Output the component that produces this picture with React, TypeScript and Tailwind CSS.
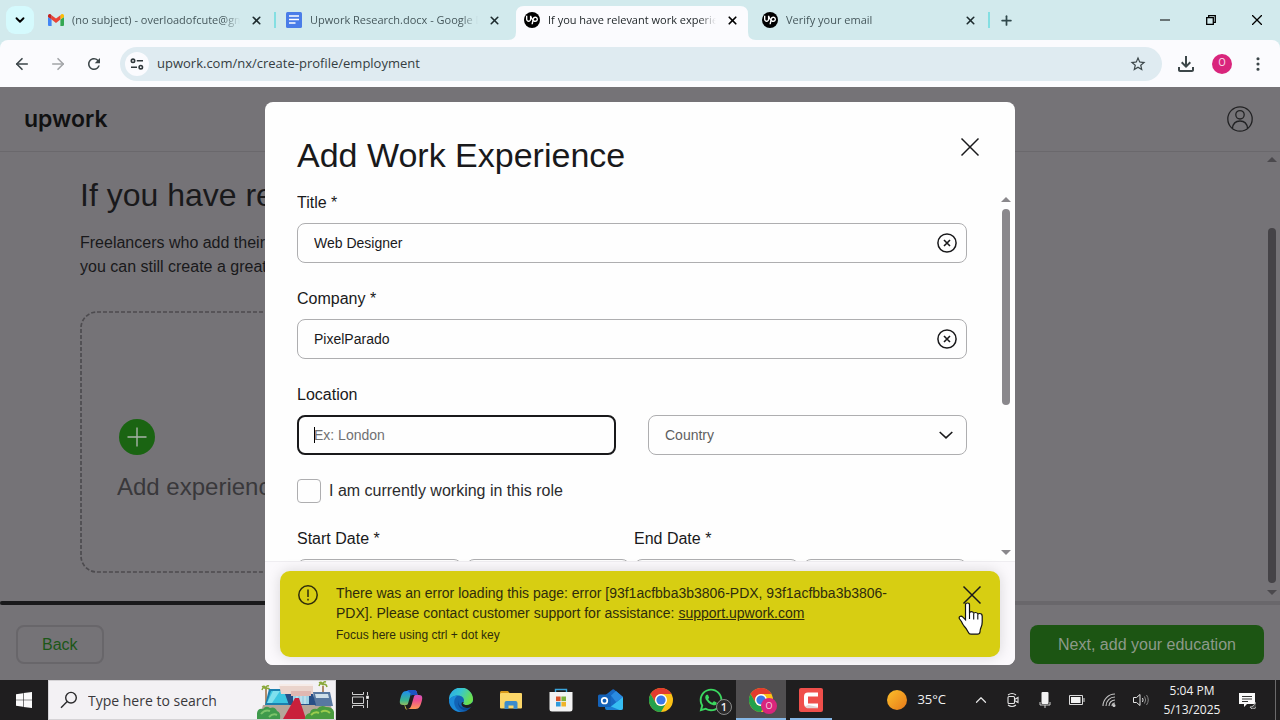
import type { ReactNode } from 'react'
import {
  ArrowLeft,
  ArrowRight,
  ChevronDown,
  ChevronUp,
  EllipsisVertical,
  Plus,
  X,
} from 'lucide-react'
import { FaWhatsapp } from 'react-icons/fa'
import { MdOutlineFileDownload, MdRefresh, MdStarBorder } from 'react-icons/md'
import { SiUpwork } from 'react-icons/si'

function GmailIcon() {
  return (
    <svg viewBox="0 0 16 12" className="h-3 w-4 shrink-0">
      <path d="M1 12h2.600V5.600L0 2.900V11a1 1 0 0 0 1 1z" fill="#4285f4" />
      <path d="M12.400 12H15a1 1 0 0 0 1-1V2.900l-3.600 2.700z" fill="#34a853" />
      <path d="M12.400 1.200v4.400L16 2.900V1.600C16 .2 14.300-.5 13.200.4z" fill="#fbbc04" />
      <path d="M3.600 5.600V1.200L8 4.500l4.400-3.300v4.400L8 8.900z" fill="#ea4335" />
      <path d="M0 1.600v1.300l3.600 2.700V1.200L2.800.4C1.700-.5 0 .2 0 1.600z" fill="#c5221f" />
    </svg>
  )
}

function DocsIcon() {
  return (
    <svg viewBox="0 0 16 16" className="size-4 shrink-0">
      <rect width="16" height="16" rx="1.500" fill="#4a7de8" />
      <path d="M3 4h10M3 7.500h10M3 11h6.500" stroke="#fff" strokeWidth="1.700" />
    </svg>
  )
}

function UpworkIcon() {
  return (
    <span className="flex size-4 shrink-0 items-center justify-center rounded-full bg-black text-white">
      <SiUpwork className="size-3" />
    </span>
  )
}

function ChromeIcon() {
  return (
    <svg viewBox="0 0 24 24" className="size-6">
      <circle cx="12" cy="12" r="12" fill="#fbc116" />
      <path d="M1.600 6a12 12 0 0 1 20.800 0H12a6 6 0 0 0-5.200 9z" fill="#e33b2e" />
      <path d="M1.600 6A12 12 0 0 0 12 24l5.200-9A6 6 0 0 1 6.800 15z" fill="#23a14c" />
      <circle cx="12" cy="12" r="6" fill="#fff" />
      <circle cx="12" cy="12" r="4.600" fill="#3b78e7" />
    </svg>
  )
}

function CopilotIcon() {
  return (
    <svg viewBox="0 0 24 24" className="size-6">
      <defs>
        <linearGradient id="copilotLeft" x1="0" y1="0" x2="0" y2="1">
          <stop offset="0" stopColor="#1d8df0" />
          <stop offset=".5" stopColor="#3cb68d" />
          <stop offset="1" stopColor="#f0c52c" />
        </linearGradient>
        <linearGradient id="copilotRight" x1="0" y1="0" x2="0" y2="1">
          <stop offset="0" stopColor="#b35bee" />
          <stop offset=".55" stopColor="#ee4f8f" />
          <stop offset="1" stopColor="#ff9a55" />
        </linearGradient>
      </defs>
      <path d="M16 2h-1c3 0 3 3 3.600 5H20c4 0 3.500 3.500 2.500 7s-2 7-6 7H8c3 0 4-2 4.800-5l2-7c.6-2 1.200-2 3.200-2z" fill="url(#copilotRight)" />
      <path d="M8 22h1c-3 0-3-3-3.600-5H4c-4 0-3.500-3.500-2.500-7s2-7 6-7H16c-3 0-4 2-4.800 5l-2 7c-.6 2-1.200 2-3.200 2z" fill="url(#copilotLeft)" />
      <path d="M8 2h7c2.500 0 3 2 3.600 5H15c-2 0-3 .3-3.500 1.500L12 6z" fill="#1c55c4" />
    </svg>
  )
}

function EdgeIcon() {
  return (
    <svg viewBox="0 0 24 24" className="size-6">
      <defs>
        <linearGradient id="edgeTop" x1="0" y1="0" x2="1" y2=".4">
          <stop offset="0" stopColor="#2aa8e8" />
          <stop offset=".5" stopColor="#37c6d0" />
          <stop offset="1" stopColor="#6be04f" />
        </linearGradient>
      </defs>
      <circle cx="12" cy="12" r="12" fill="#1263b5" />
      <path d="M0 12A12 12 0 0 1 24 11c.2 4-3 6-6 6-2.500 0-4-.8-4-1.800 0-.8 1-1.200 1-3 0-2.500-2.500-4.700-6-4.700C4.500 7.500 1 10 0 12z" fill="url(#edgeTop)" />
      <path d="M0 12c1-2.500 4.500-4.500 9-4.500-3 1.500-4.500 5-3.500 9 .8 3.500 3.500 6.500 7 7.400C5.500 24.300 0 19 0 12z" fill="#1b8ad8" />
      <path d="M9.500 11.500c-1.500 4.500 2.500 9 8 8 2-.3 3.500-1 4.500-1.700-.8 1.700-2.300 3.400-4 4.500-5 1-11-4.500-8.500-10.800z" fill="#0b4a94" />
      <path d="M14.800 14.200c-.3.500-.8.600-.8 1 0 1 1.500 1.800 4 1.800 2.300 0 4.700-1.200 5.600-3.200L24 17l-2 2c-5 2.300-9.500 0-9.500-3 0-1 .6-2.300 2.300-1.800z" fill="#1f1f1f" />
    </svg>
  )
}

function ExplorerIcon() {
  return (
    <svg viewBox="0 0 22 18" className="h-[18px] w-[22px]">
      <path d="M0 1.500C0 .7.7 0 1.500 0H8l2 2.500H0z" fill="#d99a1c" />
      <rect y="2" width="22" height="15.500" rx="1" fill="#fbd668" />
      <path d="M4.500 18v-6a2 2 0 0 1 2-2h9a2 2 0 0 1 2 2v6h-4v-3.500h-5V18z" fill="#3d8ccc" />
    </svg>
  )
}

function StoreIcon() {
  return (
    <svg viewBox="0 0 24 24" className="size-6">
      <path d="M6.500 5V1.500h11V5" fill="none" stroke="#3aa5dc" strokeWidth="1.400" />
      <path d="M.5 4h23v17a2.500 2.500 0 0 1-2.500 2.500H3A2.500 2.500 0 0 1 .5 21z" fill="#f3f3f3" />
      <path d="M7 8.500h4.600v4.600H7z" fill="#d9532c" />
      <path d="M12.400 8.500H17v4.600h-4.600z" fill="#7fb33a" />
      <path d="M7 13.900h4.600v4.600H7z" fill="#2f9bdc" />
      <path d="M12.400 13.900H17v4.600h-4.600z" fill="#f0b429" />
    </svg>
  )
}

function OutlookIcon() {
  return (
    <svg viewBox="0 0 26 22" className="h-[22px] w-[26px]">
      <path d="M5 8l9.500-7.500Q15 0 16 .5L25 8v11a2 2 0 0 1-2 2H9z" fill="#1769c4" />
      <path d="M13 6.500L18 2l7 6-7 5z" fill="#2a8ae0" />
      <path d="M25 8v11a2 2 0 0 1-2 2H8.500z" fill="#36bdf2" />
      <path d="M7 15l14.500 6H9a2 2 0 0 1-2-2z" fill="#1a7fd4" />
      <rect y="5.500" width="13" height="12.500" rx="1.500" fill="#1462b8" />
      <circle cx="6.500" cy="11.700" r="2.800" fill="none" stroke="#fff" strokeWidth="1.700" />
    </svg>
  )
}

function CamtasiaIcon() {
  return (
    <svg viewBox="0 0 24 24" className="size-6">
      <rect width="24" height="24" rx="2" fill="#ef4f4b" />
      <path d="M19 6.500H9Q7 6.500 7 8.500v7q0 2 2 2h10" fill="none" stroke="#fff" strokeWidth="4" />
      <path d="M5.500 18.500l2.500 1.700h11V19L9.500 17z" fill="#e3d4d4" />
    </svg>
  )
}

function VillaPicture() {
  return (
    <svg viewBox="0 0 78 38" className="h-[38px] w-[78px] shrink-0">
      <path d="M9 8v18M66 5v18" stroke="#9a6b3f" strokeWidth="1.500" />
      <path
        d="M9 8Q6 5 5 9M9 8Q8 4 5 6M9 8q0-4 3-3M9 8q3-2 4 2M66 4q-3-3-4 1M66 4q-1-4-4-2M66 4q0-4 3-3M66 4q3-2 4 2"
        fill="none"
        stroke="#8aa83a"
        strokeWidth="1.500"
      />
      <path d="M6 24h68l2 14H2z" fill="#b5a69a" />
      <path d="M12 8h20l2 16H8z" fill="#1b7fae" />
      <path d="M14 10h16l1 12H10z" fill="#3cc5e0" />
      <path d="M16 10h7l-8 12h-5z" fill="#7fe0ee" />
      <path d="M56 11h17l3 14H58z" fill="#5878a0" />
      <path d="M58 13h13l1 4H59z" fill="#cfe0ea" />
      <path d="M22 3h34v10H24z" fill="#ead4cc" />
      <path d="M22 3h34v2H22z" fill="#f6ece8" />
      <path d="M28 13h28l3 11H32z" fill="#274f86" />
      <path d="M34 10h20v5H34z" fill="#e0b7b1" />
      <path d="M36 15h16v8H36z" fill="#9ed3e6" />
      <path d="M40 15v8M44 15v8M48 15v8" stroke="#d9e6ee" />
      <path d="M38 17h4l7 21H26z" fill="#c9203c" />
      <path d="M0 38v-6q1-5 6-4 3-4 7-1 5-2 7 3 4 1 3 8z" fill="#3f9a4c" />
      <path d="M4 33q4-5 9-3M12 36q4-4 8-2" stroke="#7cc46b" fill="none" strokeWidth="2" />
      <path d="M48 38q0-5 5-6 1-5 7-4 4-5 9-2 7 0 8 5v7z" fill="#4a9b3f" />
      <path d="M54 34q4-4 8-2M64 31q5-3 9 1" stroke="#9bcc4e" fill="none" strokeWidth="2" />
    </svg>
  )
}

interface TabProps {
  icon: ReactNode
  title: string
  active?: boolean
  divider?: boolean
}

function BrowserTab({ icon, title, active, divider }: TabProps) {
  if (active) {
    return (
      <div className="relative flex h-[34px] w-[238px] shrink items-start pr-[6px]">
        <svg viewBox="0 0 248 34" preserveAspectRatio="none" className="absolute -left-2 top-0 h-[34px] w-[248px]">
          <path d="M0 34q8 0 8-8V8q0-8 8-8h216q8 0 8 8v18q0 8 8 8z" fill="#fbfbfe" />
        </svg>
        <div className="relative flex h-7 min-w-0 flex-1 items-center gap-2 pl-2">
          {icon}
          <span className="min-w-0 flex-1 overflow-hidden whitespace-nowrap mask-r-from-90% text-[#22282b]">
            {title}
          </span>
          <button type="button" aria-label="Close tab" className="-ml-2 flex size-8 items-center justify-center text-black">
            <X className="size-[13px]" strokeWidth={3.2} />
          </button>
        </div>
      </div>
    )
  }
  return (
    <div className="flex h-7 w-[238px] shrink items-center">
      <div className="flex min-w-0 flex-1 items-center gap-2 pl-2">
        {icon}
        <span className="min-w-0 flex-1 overflow-hidden whitespace-nowrap mask-r-from-90% text-[#46585c]">
          {title}
        </span>
        <button type="button" aria-label="Close tab" className="-ml-2 flex size-8 items-center justify-center text-[#1d2b2e]">
          <X className="size-[13px]" strokeWidth={3} />
        </button>
      </div>
      <span className="flex w-[6px] justify-center">{divider && <span className="h-4 w-0.5 bg-[#84dfe2]" />}</span>
    </div>
  )
}

function TabStrip() {
  return (
    <div className="flex h-10 items-start bg-[#d2eaed] pt-[6px] font-['Open_Sans','Noto_Sans',sans-serif] text-[11px]">
      <button type="button" aria-label="Search tabs" className="mx-[6px] flex size-7 items-center justify-center rounded-[9px] bg-[#d5fafd]">
        <ChevronDown className="size-[14px]" strokeWidth={3.2} />
      </button>
      <div className="flex min-w-0">
        <BrowserTab icon={<GmailIcon />} title="(no subject) - overloadofcute@gmail.com" divider />
        <BrowserTab icon={<DocsIcon />} title="Upwork Research.docx - Google Docs" />
        <BrowserTab icon={<UpworkIcon />} title="If you have relevant work experience" active />
        <BrowserTab icon={<UpworkIcon />} title="Verify your email" divider />
      </div>
      <button type="button" aria-label="New tab" className="flex size-7 items-center justify-center text-[#30484c]">
        <Plus className="size-[15px]" strokeWidth={2.8} />
      </button>
      <div className="-mt-[6px] ml-auto flex h-10">
        <button type="button" aria-label="Minimize" className="flex w-[46px] items-center justify-center">
          <svg viewBox="0 0 10 10" className="size-[10px]">
            <path d="M0 5h10" stroke="#000" />
          </svg>
        </button>
        <button type="button" aria-label="Restore" className="flex w-[46px] items-center justify-center">
          <svg viewBox="0 0 10 10" className="size-[10px]">
            <path d="M.7 2.700h6.600v6.600H.7zM2.700 2.500V.7h6.600v6.600H7.500" fill="none" stroke="#000" strokeWidth="1.300" />
          </svg>
        </button>
        <button type="button" aria-label="Close" className="flex w-[46px] items-center justify-center">
          <svg viewBox="0 0 10 10" className="size-[10px]">
            <path d="M0 0l10 10M10 0L0 10" stroke="#000" strokeWidth="1.300" />
          </svg>
        </button>
      </div>
    </div>
  )
}

function Toolbar() {
  return (
    <div className="bg-[#d2eaed]">
      <div className="flex h-[47px] items-center rounded-t-lg bg-[#fbfbfe] px-1 text-[#3c4649]">
        <button type="button" aria-label="Back" className="flex size-9 items-center justify-center">
          <ArrowLeft className="size-[18px]" strokeWidth={2.2} />
        </button>
        <button type="button" aria-label="Forward" className="flex size-9 items-center justify-center text-[#a3a5a8]">
          <ArrowRight className="size-[18px]" strokeWidth={2.2} />
        </button>
        <button type="button" aria-label="Reload" className="flex size-9 items-center justify-center">
          <MdRefresh className="size-[18px]" />
        </button>
        <div className="ml-2 flex h-[34px] flex-1 items-center rounded-full bg-[#dfebf1] pl-[5px] pr-[6px]">
          <button type="button" aria-label="View site information" className="flex size-6 items-center justify-center rounded-full bg-[#fbfbfe]">
            <svg viewBox="0 0 14 12" className="h-3 w-[14px]" fill="none" stroke="#30383b" strokeWidth="1.600">
              <circle cx="3" cy="2.800" r="1.700" />
              <path d="M6.800 2.800H13M1 9.200h6" />
              <circle cx="10.800" cy="9.200" r="1.700" />
            </svg>
          </button>
          <input
            aria-label="Address"
            defaultValue="upwork.com/nx/create-profile/employment"
            className="ml-2 min-w-0 flex-1 bg-transparent font-['Open_Sans','Noto_Sans',sans-serif] text-[13px] text-[#353d42] outline-none"
          />
          <button type="button" aria-label="Bookmark this tab" className="flex size-9 items-center justify-center">
            <MdStarBorder className="size-[18px]" />
          </button>
        </div>
        <button type="button" aria-label="Downloads" className="ml-[6px] flex size-9 items-center justify-center">
          <MdOutlineFileDownload className="size-6" />
        </button>
        <button type="button" aria-label="Profile" className="flex size-9 items-center justify-center">
          <span className="flex size-5 items-center justify-center rounded-full bg-[#d9257c] font-[Roboto,sans-serif] text-[11px] text-[#f6d3e4]">
            O
          </span>
        </button>
        <button type="button" aria-label="Menu" className="flex size-9 items-center justify-center">
          <EllipsisVertical className="size-[18px]" strokeWidth={2.2} />
        </button>
      </div>
    </div>
  )
}

function Triangle({ down }: { down?: boolean }) {
  return (
    <svg viewBox="0 0 10 5" className="h-[5px] w-[10px]">
      <path d={down ? 'M0 0h10L5 5z' : 'M0 5h10L5 0z'} fill="currentColor" />
    </svg>
  )
}

function ProfilePage() {
  return (
    <div className="flex h-full flex-col bg-[#757377] text-[#19191b]">
      <header className="flex h-[65px] items-center justify-between border-b border-[#6a686c] pl-6 pr-[27px]">
        <a href="#home" className="font-['Inter','Liberation_Sans',sans-serif] text-[23px] leading-8 font-semibold text-[#111112]">
          upwork
        </a>
        <button type="button" aria-label="Account">
          <svg viewBox="0 0 26 26" className="size-[26px]" fill="none" stroke="#222224" strokeWidth="1.300">
            <circle cx="13" cy="13" r="12.200" />
            <circle cx="13" cy="8.800" r="4.200" />
            <path d="M5.500 22.300c.4-4.500 3.200-7.300 7.500-7.300s7.100 2.800 7.500 7.300" />
          </svg>
        </button>
      </header>

      <div className="flex min-h-0 flex-1">
        <main className="min-w-0 flex-1 overflow-hidden pl-20 pt-[23px]">
          <h1 className="text-[32px] leading-[40px]">If you have relevant work experience, add it here.</h1>
          <p className="mt-4 text-[16px] leading-6">
            Freelancers who add their experience are twice as likely to win work.
            <br />
            you can still create a great profile. Just head on to the next page.
          </p>
          <button
            type="button"
            className="relative mt-8 flex h-[262px] w-[374px] flex-col items-start justify-end pb-[70px] pl-[37px] text-[#39383b]"
          >
            <svg viewBox="0 0 374 262" className="absolute inset-0 size-full">
              <rect
                x="1"
                y="1"
                width="372"
                height="260"
                rx="16"
                fill="none"
                stroke="#4d4b4f"
                strokeWidth="1.700"
                strokeDasharray="4 2"
              />
            </svg>
            <span className="ml-0.5 flex size-9 items-center justify-center rounded-full bg-[#1a6412] text-[#a9b3a9]">
              <svg viewBox="0 0 20 20" className="size-5">
                <path d="M10 .5v19M.5 10h19" stroke="currentColor" strokeWidth="1.400" />
              </svg>
            </span>
            <span className="mt-4 text-[24px] leading-8">Add experience</span>
          </button>
        </main>
        <div className="flex w-4 flex-col items-center justify-between pb-[6px] pt-[5px] text-[#4b494d]">
          <Triangle />
          <div className="mb-[7px] mt-auto h-[355px] w-2 rounded-full bg-[#454347]" />
          <Triangle down />
        </div>
      </div>

      <div className="h-1 bg-[#69676b]">
        <div className="h-full w-1/2 rounded-full bg-[#19191b]" />
      </div>
      <footer className="flex items-start justify-between px-4 pb-4 pt-5 text-[16px]">
        <button type="button" className="h-[39px] rounded-lg border-2 border-[#68666a] px-6 text-[#1c5717]">
          Back
        </button>
        <button type="button" className="h-[39px] w-[234px] rounded-lg bg-[#1c5513] text-[#8d9a8a]">
          Next, add your education
        </button>
      </footer>
    </div>
  )
}

interface FieldProps {
  id: string
  label: string
  value: string
}

function ClearableField({ id, label, value }: FieldProps) {
  return (
    <div className="flex flex-col gap-2">
      <label htmlFor={id} className="leading-6">
        {label}
      </label>
      <div className="flex h-10 items-center rounded-lg border border-[#aeaeb0] pl-4 pr-[9px]">
        <input id={id} defaultValue={value} className="min-w-0 flex-1 text-[14px] outline-none" />
        <button type="button" aria-label={`Clear ${id}`}>
          <svg viewBox="0 0 20 20" className="size-5" fill="none" stroke="#19191b" strokeWidth="1.500">
            <circle cx="10" cy="10" r="9.100" />
            <path d="M7 7l6 6M13 7l-6 6" strokeWidth="1.600" />
          </svg>
        </button>
      </div>
    </div>
  )
}

function DateFields({ label }: { label: string }) {
  return (
    <fieldset>
      <legend className="mb-2 leading-6">{label}</legend>
      <div className="grid grid-cols-2 gap-1">
        <select aria-label={`${label} month`} className="h-10 appearance-none rounded-lg border border-[#aeaeb0]" />
        <select aria-label={`${label} year`} className="h-10 appearance-none rounded-lg border border-[#aeaeb0]" />
      </div>
    </fieldset>
  )
}

function CloseIcon() {
  return (
    <svg viewBox="0 0 24 24" className="size-6" fill="none" stroke="#19191b" strokeWidth="1.500">
      <path d="M3.500 3.500l17 17M20.500 3.500l-17 17" />
    </svg>
  )
}

function WorkExperienceDialog() {
  return (
    <div
      role="dialog"
      aria-labelledby="dialogTitle"
      className="flex h-full w-full max-w-[750px] flex-col rounded-lg bg-[#fefefe] text-[#19191b]"
    >
      <div className="flex items-start justify-between pb-4 pl-8 pr-[33px] pt-[33px]">
        <h2 id="dialogTitle" className="text-[34px] leading-10">
          Add Work Experience
        </h2>
        <button type="button" aria-label="Close dialog">
          <CloseIcon />
        </button>
      </div>

      <div className="flex min-h-0 flex-1 pl-8 pr-px">
        <form className="mr-[31px] flex min-w-0 flex-1 flex-col gap-6 overflow-hidden text-[16px]">
          <ClearableField id="title" label="Title *" value="Web Designer" />
          <ClearableField id="company" label="Company *" value="PixelParado" />
          <div className="flex flex-col gap-2">
            <label htmlFor="city" className="leading-6">
              Location
            </label>
            <div className="grid grid-cols-2 gap-8 text-[14px]">
              <div className="relative">
                <input
                  id="city"
                  placeholder="Ex: London"
                  className="h-10 w-full rounded-lg border-2 border-[#19191b] px-[15px] outline-none placeholder:text-[#707072]"
                />
                <span className="absolute left-[17px] top-3 h-4 w-px bg-black" />
              </div>
              <div className="relative">
                <select
                  aria-label="Country"
                  className="h-10 w-full appearance-none rounded-lg border border-[#aeaeb0] px-4 text-[#5e5e60]"
                >
                  <option>Country</option>
                </select>
                <svg
                  viewBox="0 0 14 8"
                  className="pointer-events-none absolute right-[14px] top-4 h-2 w-[14px]"
                  fill="none"
                  stroke="#19191b"
                  strokeWidth="1.600"
                >
                  <path d="M.7 1L7 6.800 13.300 1" />
                </svg>
              </div>
            </div>
          </div>
          <label className="flex items-center gap-2 leading-6 text-[#2b2b2d]">
            <input type="checkbox" className="size-6 appearance-none rounded-[4px] border border-[#aeaeb0]" />
            I am currently working in this role
          </label>
          <div className="grid grid-cols-2 gap-1">
            <DateFields label="Start Date *" />
            <DateFields label="End Date *" />
          </div>
        </form>
        <div className="flex w-4 shrink-0 flex-col items-center pb-[6px] pt-[6px] text-[#8a888c]">
          <Triangle />
          <div className="mt-[7px] h-[196px] w-2 rounded-full bg-[#8a888c]" />
          <div className="mt-auto">
            <Triangle down />
          </div>
        </div>
      </div>
      <div className="h-[104px] shrink-0 rounded-b-lg border-t border-[#efedf1] bg-[#fbf9fc]" />
    </div>
  )
}

function ErrorToast() {
  return (
    <div
      role="alert"
      className="absolute inset-x-0 bottom-[23px] mx-auto flex h-[86px] w-[720px] max-w-full items-start rounded-[10px] bg-[#d7ce12] pl-[18px] pr-4 pt-3 text-[#2e2c0c] shadow-[0_0_14px_rgba(0,0,0,0.14)]"
    >
      <svg viewBox="0 0 20 20" className="mt-0.5 size-5 shrink-0" fill="none" stroke="#2e2c0c" strokeWidth="1.500">
        <circle cx="10" cy="10" r="9.200" />
        <path d="M10 4.500v7.500M10 13.800v1.700" />
      </svg>
      <div className="ml-[18px] w-[584px]">
        <p className="text-[14px] leading-5">
          There was an error loading this page: error [93f1acfbba3b3806-PDX, 93f1acfbba3b3806-PDX]. Please contact
          customer support for assistance:{' '}
          <a href="#support" className="underline">
            support.upwork.com
          </a>
        </p>
        <p className="mt-1 text-[12px] leading-4">Focus here using ctrl + dot key</p>
      </div>
      <button type="button" aria-label="Dismiss" className="ml-auto">
        <CloseIcon />
      </button>
      <svg viewBox="0 0 26 34" className="absolute right-4 top-[31px] h-[34px] w-[26px]">
        <path
          d="M7.500 2.700Q7.500 1 9.500 1t2 1.700V11q.3-1.300 2-1.300 2 0 2.200 2 .3-1.200 1.900-1.200 2 0 2.200 2 .3-1 1.800-1 2.600 0 2.600 2.700V20q0 3-1.200 5.500-1 2-1 4.500-.3 2.200-2.500 2.200h-6.500q-2 0-2.700-2Q8.500 26.500 6 24q-1.500-2-2.600-4.500L1.600 17q-1-1.700.3-2.500 1.500-.8 3 .6l2.600 2.700z"
          fill="#fff"
          stroke="#111"
          strokeWidth="1.200"
        />
        <path d="M11.500 11v6M15.700 12v5.500M19.800 12.500v5" stroke="#111" strokeWidth="1.100" />
      </svg>
    </div>
  )
}

interface TaskbarAppProps {
  name: string
  children: ReactNode
}

function TaskbarApp({ name, children }: TaskbarAppProps) {
  return (
    <button type="button" aria-label={name} className="flex w-[50px] items-center justify-center">
      {children}
    </button>
  )
}

function TrayIcons() {
  return (
    <div className="flex items-center text-[#e4e4e4]">
      <button type="button" aria-label="Show hidden icons" className="flex w-8 justify-center">
        <ChevronUp className="size-[18px]" strokeWidth={1.6} />
      </button>
      <button type="button" aria-label="Meet now" className="flex w-8 justify-center">
        <svg viewBox="0 0 14 16" className="h-4 w-[14px]" fill="none" stroke="currentColor" strokeWidth="1.100">
          <rect x="2" y="4.500" width="6.500" height="7" rx="1" />
          <path d="M8.500 7.500L12 5.500v5L8.500 8.500M2 3Q6 0 10 3M2 13Q6 16 10 13" />
        </svg>
      </button>
      <button type="button" aria-label="Microphone" className="flex w-8 justify-center">
        <svg viewBox="0 0 12 16" className="h-4 w-3">
          <rect x="2.500" width="7" height="12" rx="1" fill="#f2f2f2" />
          <path d="M1 10v3h10v-3M6 13v3" stroke="#cfcfcf" fill="none" />
        </svg>
      </button>
      <button type="button" aria-label="Battery" className="flex w-8 justify-center">
        <svg viewBox="0 0 16 10" className="h-[10px] w-4">
          <path d="M.5.500h13v9H.5zM15 3v4" fill="none" stroke="#dcdcdc" />
          <path d="M2 2h9.500v6H2z" fill="#f2f2f2" />
        </svg>
      </button>
      <button type="button" aria-label="Network" className="flex w-8 justify-center">
        <svg viewBox="0 0 14 14" className="size-[14px]" fill="none" stroke="#c4c4c4" strokeWidth="1.100">
          <path d="M1 13A12 12 0 0 1 13 1M4 13a9 9 0 0 1 9-9M7 13a6 6 0 0 1 6-6M10 13a3 3 0 0 1 3-3" />
          <circle cx="12" cy="12.500" r="1" fill="#eee" />
        </svg>
      </button>
      <button type="button" aria-label="Volume" className="flex w-8 justify-center">
        <svg viewBox="0 0 16 14" className="h-[14px] w-4" fill="none" stroke="currentColor">
          <path d="M.5 4.500h3L7 1.500v11L3.500 9.500h-3z" />
          <path d="M9.500 5q1.200 2 0 4" />
          <path d="M11.500 3.500q2.400 3.500 0 7M13.500 2q3.500 5 0 10" stroke="#858585" />
        </svg>
      </button>
    </div>
  )
}

function Taskbar() {
  return (
    <div className="flex h-10 shrink-0 bg-[#1f1e1f] font-['Open_Sans','Noto_Sans',sans-serif] text-[#f1f1f1]">
      <button type="button" aria-label="Start" className="flex w-12 items-center justify-center">
        <svg viewBox="0 0 16 16" className="size-4" fill="#fafafa">
          <path d="M0 2.200L7 1.200v6.500H0zM7.600 1.100L16 0v7.700H7.600zM0 8.300h7v6.500l-7-1zM7.600 8.300H16V16l-8.400-1.100z" />
        </svg>
      </button>
      <div className="flex w-72 items-center border border-[#d5d3d6] bg-[#f3f1f4] pl-[11px] text-[#333335]">
        <svg viewBox="0 0 18 18" className="size-[18px] shrink-0" fill="none" stroke="#29292b" strokeWidth="1.400">
          <circle cx="11" cy="6.700" r="5.300" />
          <path d="M7.200 10.500L1 16.700" />
        </svg>
        <input
          aria-label="Search Windows"
          placeholder="Type here to search"
          className="ml-[10px] min-w-0 flex-1 text-[14px] outline-none placeholder:text-[#39383b]"
        />
        <VillaPicture />
      </div>
      <button type="button" aria-label="Task view" className="flex w-[50px] items-center justify-center">
        <svg viewBox="0 0 18 16" className="h-4 w-[18px]" fill="none" stroke="#cfcfcf">
          <path d="M.5 0v2.500h11V0M.5 5h11v6.500H.5zM.5 16v-2.500h11V16M15.500 0v3M15.500 8v8" />
          <path d="M14.500 4h2v2.500h-2z" fill="#fff" />
        </svg>
      </button>
      <TaskbarApp name="Copilot">
        <CopilotIcon />
      </TaskbarApp>
      <TaskbarApp name="Edge">
        <EdgeIcon />
      </TaskbarApp>
      <TaskbarApp name="File Explorer">
        <ExplorerIcon />
      </TaskbarApp>
      <TaskbarApp name="Microsoft Store">
        <StoreIcon />
      </TaskbarApp>
      <TaskbarApp name="Outlook">
        <OutlookIcon />
      </TaskbarApp>
      <TaskbarApp name="Chrome">
        <ChromeIcon />
      </TaskbarApp>
      <TaskbarApp name="WhatsApp">
        <span className="relative">
          <FaWhatsapp className="size-[26px] text-[#3bd75f]" />
          <span className="absolute -bottom-0.5 -right-2 flex size-4 items-center justify-center rounded-full border border-[#8a8a8a] bg-[#2b2a2b] text-[11px] font-semibold">
            1
          </span>
        </span>
      </TaskbarApp>
      <button
        type="button"
        aria-label="Chrome, current window"
        className="flex w-[50px] items-center justify-center border-b-2 border-[#86b7e6] bg-[#504e50] pt-0.5"
      >
        <span className="relative">
          <ChromeIcon />
          <span className="absolute -bottom-0.5 -right-1 flex size-4 items-center justify-center rounded-full bg-[#d9257c] text-[9px] text-[#f6d3e4]">
            O
          </span>
        </span>
      </button>
      <button
        type="button"
        aria-label="Camtasia"
        className="mx-1 flex w-[42px] items-center justify-center border-b-2 border-[#86b7e6] pt-0.5"
      >
        <CamtasiaIcon />
      </button>

      <div className="ml-auto flex">
        <button type="button" className="mr-[19px] flex items-center gap-[10px] text-[13px]">
          <span className="size-5 rounded-full bg-linear-to-br from-[#fbc02a] to-[#e5781a]" />
          35°C
        </button>
        <TrayIcons />
        <button type="button" className="w-[70px] text-center text-[12px] leading-[19px]">
          <span className="block">5:04 PM</span>
          <span className="block">5/13/2025</span>
        </button>
        <button type="button" aria-label="Notifications" className="mr-2 flex w-10 items-center justify-center">
          <svg viewBox="0 0 17 17" className="size-[17px]">
            <path d="M0 1h16v11h-8l-3 3v-3H0z" fill="#fafafa" />
            <path d="M3 4.500h10M3 7h10M3 9.500h6" stroke="#333" />
            <path d="M16 10.500a3.500 3.500 0 1 1-5 4.500q4 0 5-4.500z" fill="#444" stroke="#ddd" strokeWidth=".8" />
          </svg>
        </button>
        <span className="mr-1 w-px bg-[#6b6a6b]" />
      </div>
    </div>
  )
}

export default function App() {
  return (
    <div className="flex h-screen flex-col overflow-hidden font-['Liberation_Sans',Arial,sans-serif]">
      <TabStrip />
      <Toolbar />
      <div className="relative min-h-0 flex-1">
        <ProfilePage />
        <div className="absolute inset-0 flex justify-center py-[15px]">
          <WorkExperienceDialog />
        </div>
        <ErrorToast />
      </div>
      <Taskbar />
    </div>
  )
}
